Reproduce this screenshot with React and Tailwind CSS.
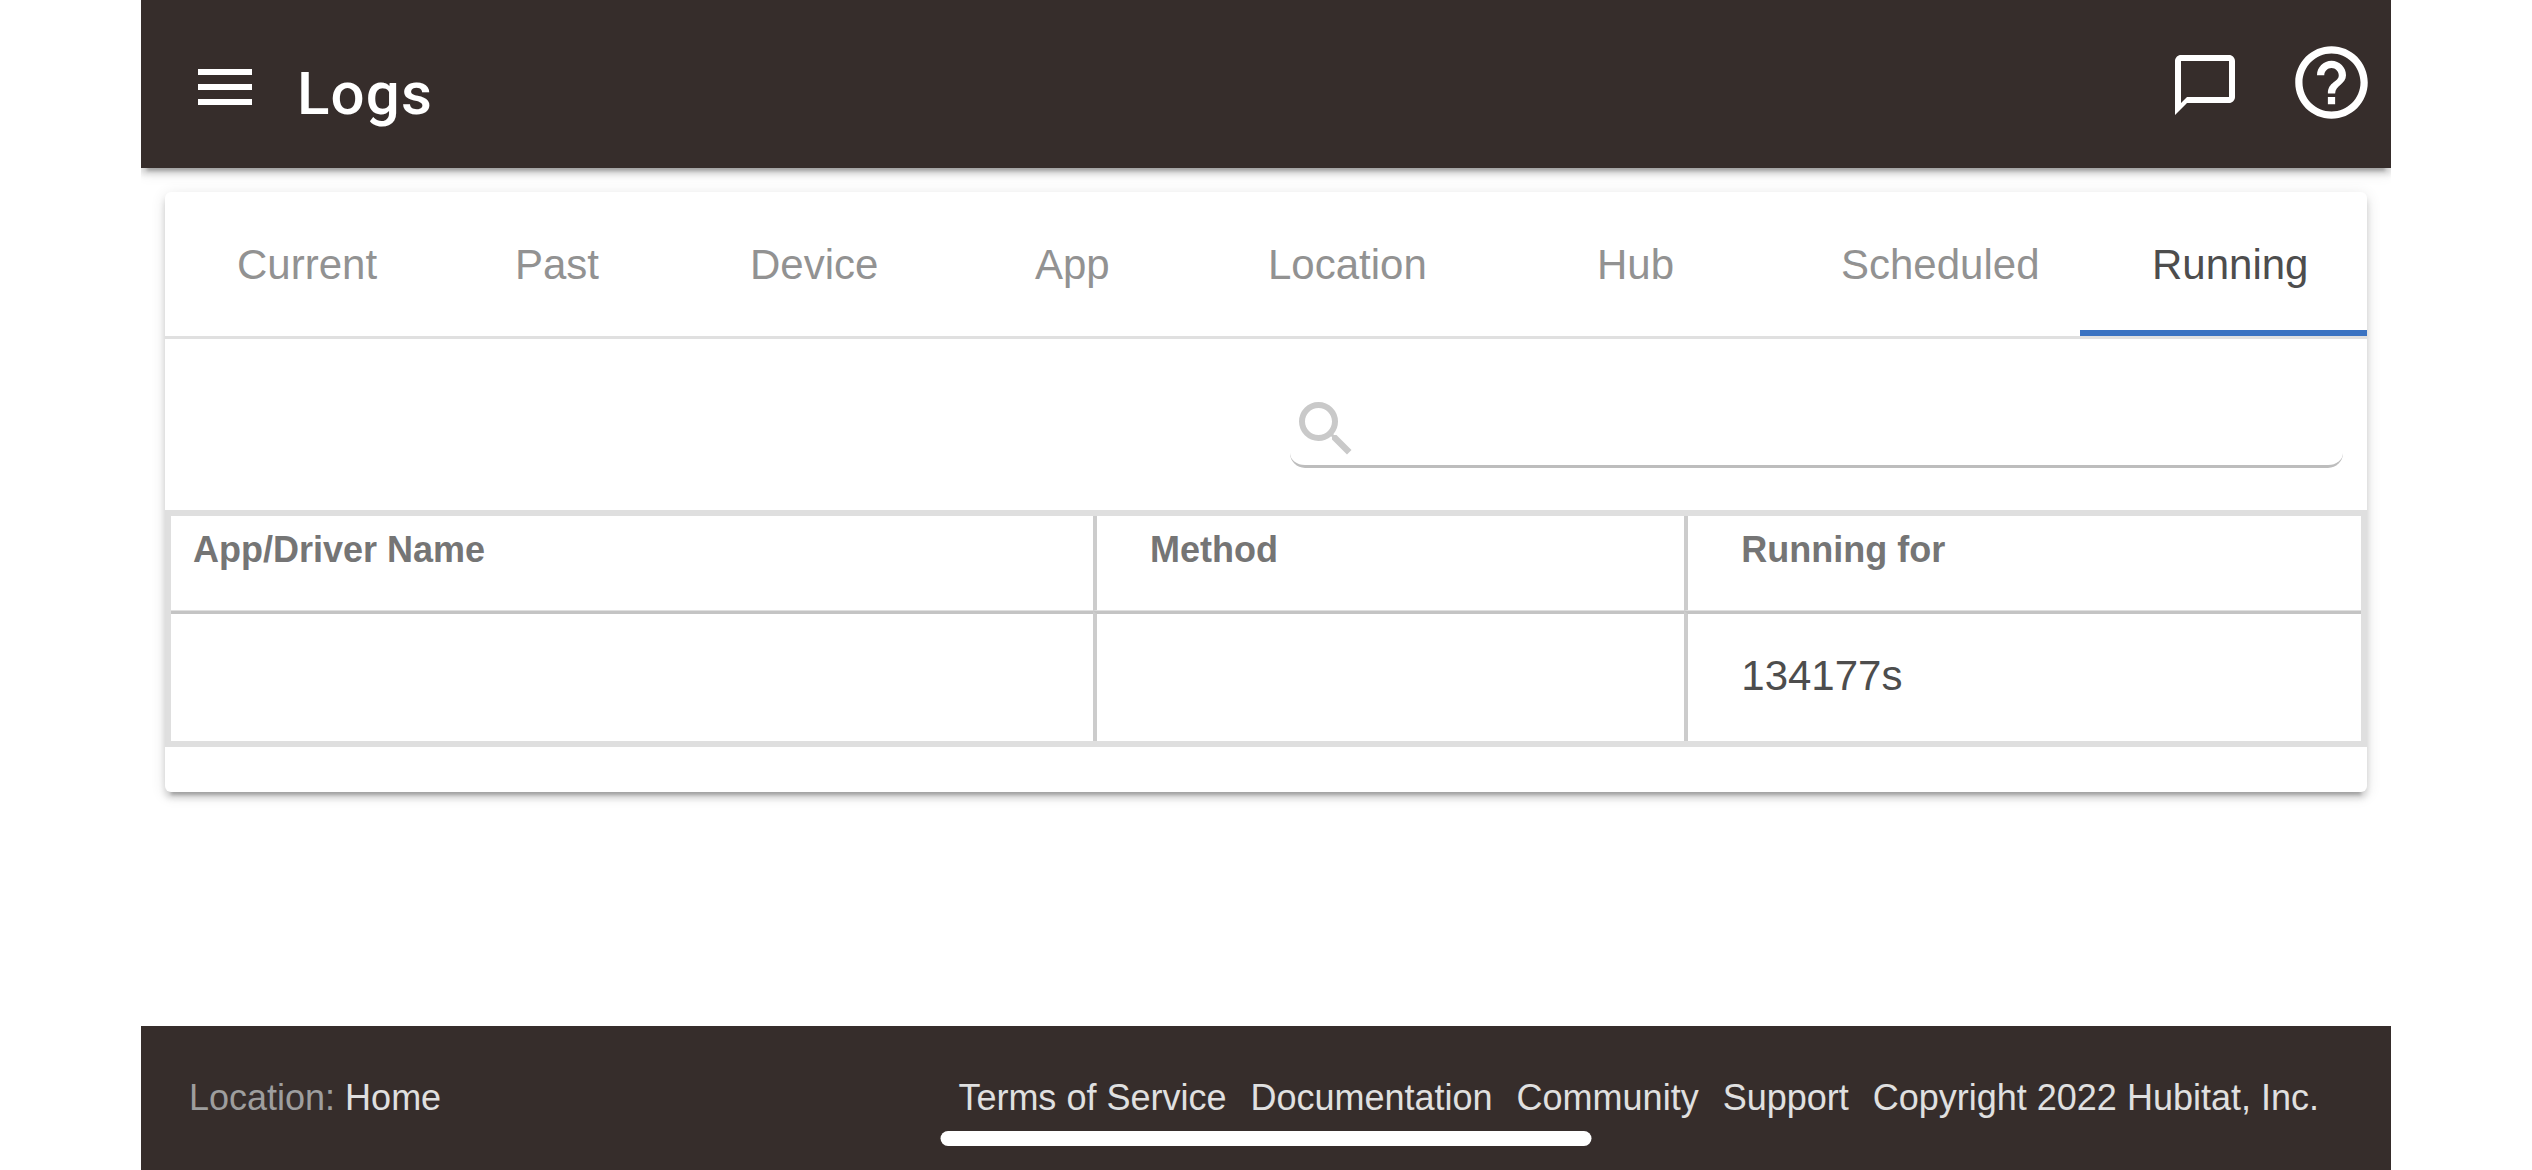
import React, { useState } from 'react';
import { MdMenu, MdChatBubbleOutline, MdHelpOutline, MdSearch } from 'react-icons/md';

const tabs = ['Current', 'Past', 'Device', 'App', 'Location', 'Hub', 'Scheduled', 'Running'];

const links = ['Terms of Service', 'Documentation', 'Community', 'Support'];

const rows = [{ name: '', method: '', runningFor: '134177s' }];

const Header = () => (
    <header className="flex h-[168px] shrink-0 items-center justify-between bg-[#362d2b] pl-12 pr-4 text-white shadow-[0_6px_6px_0_rgba(0,0,0,0.14),0_9px_3px_-6px_rgba(0,0,0,0.2),0_3px_15px_0_rgba(0,0,0,0.12)]">
        <div className="flex items-center gap-9 pt-1.5">
            <button aria-label="Menu">
                <MdMenu size={72} />
            </button>
            <h1 className="pt-3.5 font-[Roboto,sans-serif] text-[60px] font-medium leading-[72px] tracking-[0.02em]">Logs</h1>
        </div>
        <div className="flex items-center gap-[47px]">
            <button aria-label="Messages" className="pt-0.5">
                <MdChatBubbleOutline size={72} />
            </button>
            <button aria-label="Help" className="pb-1">
                <MdHelpOutline size={87} />
            </button>
        </div>
    </header>
);

const TabBar = ({ active, onChange }) => (
    <nav className="grid grid-cols-[278fr_235fr_285fr_233fr_329fr_244fr_311fr_287fr] border-b-[3px] border-[#e0e0e0]">
        {tabs.map((tab) => (
            <button
                key={tab}
                onClick={() => onChange(tab)}
                className={`h-36 border-b-[6px] pl-[72px] pt-2 text-left text-[42px] leading-[48px] ${
                    tab === active ? 'border-[#3b73c2] text-[#4d4d4d]' : 'border-transparent text-[#929292]'
                }`}
            >
                {tab}
            </button>
        ))}
    </nav>
);

const SearchBox = () => (
    <div className="grid grid-cols-2 gap-12 px-6 py-[42px]">
        <label className="col-start-2 flex h-[87px] items-center rounded-[15px] border-b-[3px] border-[#bdbdbd] pt-3 text-[#c9c9c9]">
            <MdSearch size={72} className="shrink-0" />
            <input type="search" aria-label="Search" className="min-w-0 grow bg-transparent text-[42px] text-[#4d4d4d] outline-none" />
        </label>
    </div>
);

const RunningTable = () => (
    <table className="w-full table-fixed border-separate border-spacing-0 border-[6px] border-[#dfdfdf]">
        <thead>
            <tr className="h-[95px] text-left align-top text-[36px] leading-[48px] text-[#757575]">
                <th className="w-[42.1%] border-b border-[#dfdfdf] pl-[22px] pt-2.5">App/Driver Name</th>
                <th className="w-[27%] border-b border-l-4 border-[#dfdfdf] border-l-[#cccccc] pl-[53px] pt-2.5">Method</th>
                <th className="border-b border-l-4 border-[#dfdfdf] border-l-[#cccccc] pl-[53px] pt-2.5">Running for</th>
            </tr>
        </thead>
        <tbody>
            {rows.map((row) => (
                <tr key={row.runningFor} className="h-[130px] text-[42px] leading-[48px] text-[#4d4d4d]">
                    <td className="border-t-[3px] border-[#c4c4c4] pb-1 pl-[22px]">{row.name}</td>
                    <td className="border-l-4 border-t-[3px] border-[#c4c4c4] border-l-[#cccccc] pb-1 pl-[53px]">{row.method}</td>
                    <td className="border-l-4 border-t-[3px] border-[#c4c4c4] border-l-[#cccccc] pb-1 pl-[53px]">{row.runningFor}</td>
                </tr>
            ))}
        </tbody>
    </table>
);

const Footer = () => (
    <footer className="mt-auto flex h-36 shrink-0 items-center justify-between bg-[#362d2b] px-12 text-[36px] leading-[48px] text-[#e0e0e0]">
        <div>
            <span className="text-[#9e9e9e]">Location:</span> Home
        </div>
        <div className="flex gap-6 pr-6">
            {links.map((link) => (
                <a key={link} href="#">{link}</a>
            ))}
            <span>Copyright 2022 Hubitat, Inc.</span>
        </div>
    </footer>
);

const App = () => {
    const [active, setActive] = useState('Running');

    return (
        <div className="relative min-h-screen bg-white px-[141px] font-['Liberation_Sans',Arial,sans-serif]">
            <div className="flex min-h-screen flex-col overflow-hidden">
                <Header />
                <main className="m-6 rounded-md bg-white pb-[45px] shadow-[0_6px_6px_0_rgba(0,0,0,0.14),0_9px_3px_-6px_rgba(0,0,0,0.2),0_3px_15px_0_rgba(0,0,0,0.12)]">
                    <TabBar active={active} onChange={setActive} />
                    <SearchBox />
                    <RunningTable />
                </main>
                <Footer />
            </div>

            {/* Home indicator */}
            <div className="absolute bottom-6 left-1/2 h-[15px] w-[651px] -translate-x-1/2 rounded-full bg-white" />
        </div>
    );
};

export default App;
